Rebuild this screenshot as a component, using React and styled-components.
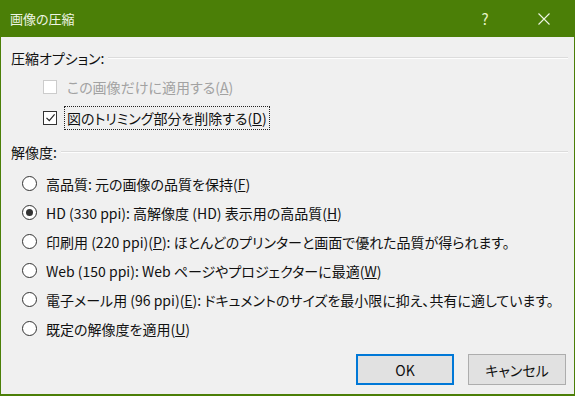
import styled, { createGlobalStyle } from "styled-components";

const GlobalStyle = createGlobalStyle`
  html, body {
    margin: 0;
    padding: 0;
    background: #f0f0f0;
  }
  * {
    box-sizing: border-box;
  }
`;

const options = [
  { label: "高品質: 元の画像の品質を保持", key: "F" },
  { label: "HD (330 ppi): 高解像度 (HD) 表示用の高品質", key: "H", checked: true },
  { label: "印刷用 (220 ppi)", key: "P", tail: ": ほとんどのプリンターと画面で優れた品質が得られます。" },
  { label: "Web (150 ppi): Web ページやプロジェクターに最適", key: "W" },
  { label: "電子メール用 (96 ppi)", key: "E", tail: ": ドキュメントのサイズを最小限に抑え、共有に適しています。" },
  { label: "既定の解像度を適用", key: "U" },
];

const Key = ({ k }) => (
  <>
    (<u>{k}</u>)
  </>
);

export default function App() {
  return (
    <>
      <GlobalStyle />
      <Window>
        <TitleBar>
          <Title>画像の圧縮</Title>
          <CaptionButton $width={56}>?</CaptionButton>
          <CaptionButton $width={62}>
            <svg width="12" height="12" viewBox="0 0 12 12">
              <path d="M0.5 0.5 L11.5 11.5 M11.5 0.5 L0.5 11.5" stroke="#eef5e4" strokeWidth="1.1" fill="none" />
            </svg>
          </CaptionButton>
        </TitleBar>
        <Body>
          <GroupHeader>
            <span>圧縮オプション:</span>
            <Rule />
          </GroupHeader>
          <CheckList>
            <CheckRow $disabled>
              <CheckBox $disabled />
              <Label>
                この画像だけに適用する<Key k="A" />
              </Label>
            </CheckRow>
            <CheckRow>
              <CheckBox>
                <svg width="11" height="11" viewBox="0 0 11 11">
                  <path d="M1.5 5.8 L4.3 8.6 L9.6 2.4" stroke="#222" strokeWidth="1.2" fill="none" />
                </svg>
              </CheckBox>
              <Label $focused>
                図のトリミング部分を削除する<Key k="D" />
              </Label>
            </CheckRow>
          </CheckList>
          <GroupHeader $top={10}>
            <span>解像度:</span>
            <Rule />
          </GroupHeader>
          <RadioList>
            {options.map((o) => (
              <RadioRow key={o.key}>
                <Radio $checked={o.checked} />
                <Label>
                  {o.label}
                  <Key k={o.key} />
                  {o.tail}
                </Label>
              </RadioRow>
            ))}
          </RadioList>
          <Footer>
            <Button $default>OK</Button>
            <Button>キャンセル</Button>
          </Footer>
        </Body>
      </Window>
    </>
  );
}

const Window = styled.div`
  width: 575px;
  height: 396px;
  display: flex;
  flex-direction: column;
  border: 1px solid #4b7f07;
  border-top: none;
  border-bottom-width: 2px;
  background: #f0f0f0;
  font-family: "Noto Sans CJK JP", "Noto Sans", sans-serif;
  font-feature-settings: "palt";
  font-size: 14px;
  color: #111;
`;

const TitleBar = styled.div`
  height: 37px;
  margin: 0 -1px;
  padding-left: 10px;
  display: flex;
  align-items: center;
  background: #4b7f07;
  color: #eef5e4;
`;

const Title = styled.div`
  flex: 1;
  font-size: 13px;
`;

const CaptionButton = styled.div`
  width: ${(p) => p.$width}px;
  height: 37px;
  display: flex;
  align-items: center;
  justify-content: center;
  font-size: 15px;
  color: #e8f3c8;
`;

const Body = styled.div`
  flex: 1;
  display: flex;
  flex-direction: column;
  padding: 12px 6px 0 10px;
`;

const GroupHeader = styled.div`
  height: 18px;
  margin-top: ${(p) => p.$top || 0}px;
  display: flex;
  align-items: center;
  gap: 4px;
  white-space: nowrap;
`;

const Rule = styled.div`
  flex: 1;
  height: 2px;
  border-top: 1px solid #dcdcdc;
  border-bottom: 1px solid #fdfdfd;
`;

const CheckList = styled.div`
  display: flex;
  flex-direction: column;
  margin-top: 4px;
  padding-left: 32px;
`;

const CheckRow = styled.div`
  height: 31px;
  display: flex;
  align-items: center;
  gap: 8px;
  color: ${(p) => (p.$disabled ? "#a2a2a2" : "#111")};
`;

const CheckBox = styled.div`
  width: 14px;
  height: 14px;
  display: flex;
  align-items: center;
  justify-content: center;
  background: #fff;
  border: 1px solid ${(p) => (p.$disabled ? "#cccccc" : "#333")};
`;

const Label = styled.span`
  white-space: nowrap;
  padding: 2px 2px;
  outline: ${(p) => (p.$focused ? "1px dotted #222" : "none")};
  outline-offset: 0;
  line-height: 18px;
`;

const RadioList = styled.div`
  display: flex;
  flex-direction: column;
  margin-top: 8px;
  padding-left: 11px;
`;

const RadioRow = styled.div`
  height: 29px;
  display: flex;
  align-items: center;
  gap: 7px;
`;

const Radio = styled.div`
  width: 15px;
  height: 15px;
  border-radius: 50%;
  border: 1px solid #333;
  background: #fff;
  display: flex;
  align-items: center;
  justify-content: center;
  &::after {
    content: "";
    width: 7px;
    height: 7px;
    border-radius: 50%;
    background: ${(p) => (p.$checked ? "#333" : "transparent")};
  }
`;

const Footer = styled.div`
  display: flex;
  justify-content: flex-end;
  gap: 14px;
  margin-top: 11px;
  padding-right: 2px;
`;

const Button = styled.div`
  width: 98px;
  height: 31px;
  display: flex;
  align-items: center;
  justify-content: center;
  background: #e1e1e1;
  border: ${(p) => (p.$default ? "2px solid #0078d7" : "1px solid #adadad")};
  font-size: 14px;
  color: #111;
`;
